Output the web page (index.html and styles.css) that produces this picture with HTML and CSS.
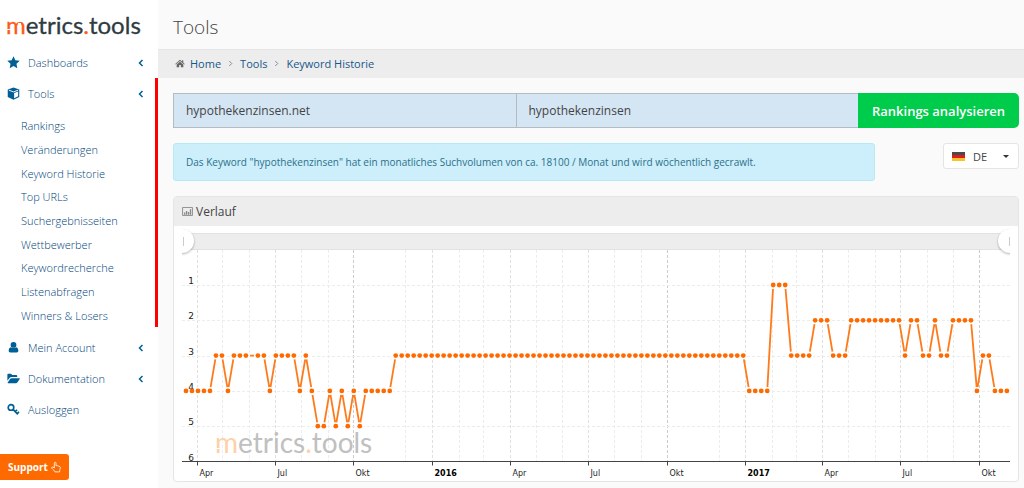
FILE: index.html
```html
<!DOCTYPE html>
<html lang="de">
<head>
    <meta charset="UTF-8">
    <meta name="viewport" content="width=device-width, initial-scale=1.0">
    <title>metrics.tools - Keyword Historie</title>
    <link rel="stylesheet" href="styles.css">
</head>
<body>
    <aside class="sidebar">
        <a href="#" class="logo" aria-label="metrics.tools">
            <svg width="150" height="32" viewBox="0 0 150 32">
                <text class="logo-text" x="6" y="26"><tspan class="logo-accent">m</tspan>etrics<tspan class="logo-accent">.</tspan>tools</text>
                <path class="logo-cut" d="M6 21.500h5M11 16.500h3M18 15.500h3"/>
            </svg>
        </a>
        <nav>
            <ul class="menu">
                <li>
                    <a href="#" class="menu-link">
                        <svg class="icon" viewBox="0 0 14 14"><path d="M7 .3l2 4.300 4.700.6-3.500 3.200.9 4.700L7 10.800l-4.100 2.300.9-4.700L.3 5.200 5 4.600z"/></svg>
                        <span>Dashboards</span>
                        <svg class="arrow" viewBox="0 0 6 8"><path d="M4.500 1L1.500 4l3 3"/></svg>
                    </a>
                </li>
                <li class="open">
                    <a href="#" class="menu-link">
                        <svg class="icon" viewBox="0 0 14 14"><path d="M7 .5l6.200 2.300v8.100L7 13.700.8 10.900V2.800z"/><path class="icon-cut" d="M2 3.400l5 1.900 5-1.900"/><path class="icon-hole" d="M7.700 6.400l4.300-1.600v5.200l-4.300 2.200z"/></svg>
                        <span>Tools</span>
                        <svg class="arrow" viewBox="0 0 6 8"><path d="M4.500 1L1.500 4l3 3"/></svg>
                    </a>
                    <ul class="submenu">
                        <li><a href="#">Rankings</a></li>
                        <li><a href="#">Veränderungen</a></li>
                        <li><a href="#">Keyword Historie</a></li>
                        <li><a href="#">Top URLs</a></li>
                        <li><a href="#">Suchergebnisseiten</a></li>
                        <li><a href="#">Wettbewerber</a></li>
                        <li><a href="#">Keywordrecherche</a></li>
                        <li><a href="#">Listenabfragen</a></li>
                        <li><a href="#">Winners &amp; Losers</a></li>
                    </ul>
                </li>
                <li>
                    <a href="#" class="menu-link">
                        <svg class="icon" viewBox="0 0 14 14"><circle cx="7" cy="4.200" r="3.100"/><path d="M4.200 6.600C2.400 7 1.800 8.600 1.800 10.600c0 1.200.8 1.800 1.800 1.800h6.800c1 0 1.800-.6 1.800-1.800 0-2-.6-3.600-2.400-4-1.600 1.400-4 1.400-5.600 0z"/></svg>
                        <span>Mein Account</span>
                        <svg class="arrow" viewBox="0 0 6 8"><path d="M4.500 1L1.500 4l3 3"/></svg>
                    </a>
                </li>
                <li>
                    <a href="#" class="menu-link">
                        <svg class="icon" viewBox="0 0 14 14"><path d="M.4 9.500V2.900c0-.6.400-1 1-1h2.800c.6 0 1 .4 1 1v.4h4.800c.6 0 1 .4 1 1v1.200H5c-.9 0-1.900.4-2.500 1.100z"/><path d="M.6 11.600l2.900-4.200c.3-.5.9-.8 1.500-.8h8.200c.6 0 .8.4.5.9l-2.600 3.800c-.3.500-.9.800-1.500.8H1.300c-.6 0-.9-.2-.7-.5z"/></svg>
                        <span>Dokumentation</span>
                        <svg class="arrow" viewBox="0 0 6 8"><path d="M4.500 1L1.500 4l3 3"/></svg>
                    </a>
                </li>
                <li>
                    <a href="#" class="menu-link">
                        <svg class="icon icon-line" viewBox="0 0 14 14"><circle cx="4.300" cy="4.800" r="3"/><path d="M6.500 6.800l5.200 5.400M8.800 9.300l2-1.900M10.900 11.400l2-1.900"/></svg>
                        <span>Ausloggen</span>
                    </a>
                </li>
            </ul>
        </nav>
    </aside>

    <main class="content">
        <h1 class="page-title">Tools</h1>
        <nav class="breadcrumb">
            <svg class="home" viewBox="0 0 12 10"><path d="M6 .6L.3 5.500l.6.7L6 1.900l5.100 4.300.6-.7-1.800-1.600V1H8.500v1.700z"/><path d="M6 2.800L2 6.100v3.500h3V6.900h2v2.700h3V6.100z"/></svg>
            <a href="#">Home</a>
            <svg class="sep" viewBox="0 0 6 8"><path d="M1.500 1l3 3-3 3"/></svg>
            <a href="#">Tools</a>
            <svg class="sep" viewBox="0 0 6 8"><path d="M1.500 1l3 3-3 3"/></svg>
            <a href="#">Keyword Historie</a>
        </nav>

        <div class="page-body">
            <form class="search">
                <input type="text" aria-label="Domain" value="hypothekenzinsen.net">
                <input type="text" aria-label="Keyword" value="hypothekenzinsen">
                <button type="button">Rankings analysieren</button>
            </form>

            <div class="info-row">
                <div class="alert">Das Keyword "hypothekenzinsen" hat ein monatliches Suchvolumen von ca. 18100 / Monat und wird wöchentlich gecrawlt.</div>
                <div class="country">
                    <svg class="flag" viewBox="0 0 13 9"><path fill="#4a4a4a" d="M0 0h13v3H0z"/><path fill="#e01b1b" d="M0 3h13v3H0z"/><path fill="#f6c52c" d="M0 6h13v3H0z"/></svg>
                    <select aria-label="Land">
                        <option>DE</option>
                        <option>AT</option>
                        <option>CH</option>
                    </select>
                    <svg class="caret" viewBox="0 0 6 3"><path d="M0 0h6L3 3z"/></svg>
                </div>
            </div>

            <section class="panel">
                <h2 class="panel-head">
                    <svg class="chart-icon" viewBox="0 0 12 10"><path fill="none" stroke="#888" d="M.5.5h11v9H.5z"/><path fill="#888" d="M2 6h1.500v2.500H2zM4.200 4.500h1.500v4H4.200zM6.400 5.500h1.500v3H6.400zM8.600 2.500h1.500v6H8.600z"/></svg>
                    Verlauf
                </h2>
                <div class="panel-body">
                    <svg id="history-chart" class="chart" viewBox="0 0 828 255" role="img" aria-label="Verlauf"></svg>
                </div>
            </section>
        </div>
    </main>

    <button type="button" class="support">
        Support
        <svg viewBox="0 0 12 14"><path d="M4 8.200V2.300c0-1.500 2-1.500 2 0v3.300c.5-.6 1.600-.5 1.900.2.700-.4 1.500-.1 1.700.6.900-.2 1.600.3 1.600 1.200 0 2-.9 2.700-.9 5.300H4.800C4.500 11.500 2.200 10 1 8.600c-.7-1 .4-2 1.400-1.400z"/></svg>
    </button>

    <script src="chart.js"></script>
</body>
</html>
```
FILE: styles.css
```css
* {
    box-sizing: border-box;
}
body {
    margin: 0;
    display: flex;
    min-height: 100vh;
    background: #fafafa;
    font-family: "Open Sans", sans-serif;
    font-size: 11px;
    color: #444;
}
a {
    color: #17578a;
    text-decoration: none;
}
ul {
    list-style: none;
    margin: 0;
    padding: 0;
}

/* Sidebar */
.sidebar {
    flex: 0 0 158px;
    background: #fff;
}
.logo {
    display: block;
    height: 47px;
    padding-top: 8px;
}
.logo svg {
    display: block;
}
.logo-text {
    font-family: Lato, sans-serif;
    font-size: 24px;
    fill: #2f3b40;
    stroke: #2f3b40;
    stroke-width: 0.3;
}
.logo-accent {
    fill: #ff5a14;
    stroke: #ff5a14;
}
.logo-cut {
    fill: none;
    stroke: #fff;
    stroke-width: 1;
}
.menu-link {
    display: flex;
    align-items: center;
    height: 31px;
    padding: 0 14px 0 7px;
}
.menu-link span {
    flex: 1;
}
.menu {
    font-weight: 300;
}
.menu a {
    color: #00457c;
}
.icon {
    width: 13px;
    height: 13px;
    margin-right: 8px;
    fill: #005f96;
}
.icon-cut {
    fill: none;
    stroke: #fff;
    stroke-width: 1;
}
.icon-hole {
    fill: #fff;
}
.icon-line {
    fill: none;
    stroke: #005f96;
    stroke-width: 1.8;
}
.arrow {
    width: 6px;
    height: 8px;
    fill: none;
    stroke: #005f96;
    stroke-width: 1.5;
}
.open {
    margin-bottom: 5px;
    border-right: 3px solid #f00;
}
.open .menu-link {
    padding-right: 11px;
}
.submenu {
    display: grid;
    grid-auto-rows: 1fr;
    align-items: center;
    height: 218px;
    padding: 5px 0 0 21px;
}

/* Content */
.content {
    flex: 1;
    min-width: 0;
}
.page-title {
    margin: 0;
    padding: 5px 15px 0;
    height: 49px;
    line-height: 44px;
    font-size: 19px;
    font-weight: 300;
    color: #444;
}
.breadcrumb {
    display: flex;
    align-items: center;
    gap: 7px;
    height: 29px;
    padding: 0 17px 2px;
    background: #ededed;
    border-top: 1px solid #e5e5e5;
}
.home {
    width: 10px;
    height: 9px;
    margin-right: -2px;
    fill: #666;
}
.sep {
    width: 5px;
    height: 7px;
    fill: none;
    stroke: #777;
}
.page-body {
    padding: 15px 5px 6px 15px;
}
.search {
    display: flex;
    height: 35px;
}
.search input {
    flex: 1;
    min-width: 0;
    padding: 0 12px;
    border: 1px solid #b5bbc0;
    border-radius: 0;
    background: #d4e6f4;
    font: 12px "Open Sans", sans-serif;
    color: #444;
}
.search input + input {
    border-left: 0;
    border-right: 0;
}
.search button {
    flex: 0 0 161px;
    padding: 0;
    border: 0;
    border-radius: 0 5px 5px 0;
    background: #00cc4b;
    color: #fff;
    font: 600 13px "Open Sans", sans-serif;
}
.info-row {
    display: flex;
    justify-content: space-between;
    align-items: flex-start;
    margin: 15px 0;
}
.alert {
    width: 83%;
    padding: 10px 12px;
    border: 1px solid #b5eaf5;
    border-radius: 3px;
    background: #cdeefb;
    color: #2b7189;
    font-size: 10px;
    line-height: 16px;
}
.country {
    position: relative;
}
.country select {
    width: 76px;
    height: 26px;
    padding: 0 29px;
    appearance: none;
    border: 1px solid #e5e5e5;
    border-radius: 3px;
    background: #fff;
    font: 11px "Open Sans", sans-serif;
    color: #444;
}
.flag {
    position: absolute;
    left: 9px;
    top: 9px;
    width: 13px;
    height: 9px;
}
.caret {
    position: absolute;
    right: 10px;
    top: 12px;
    width: 6px;
    height: 3px;
    fill: #333;
}

/* Chart panel */
.panel {
    border: 1px solid #e5e5e5;
    border-radius: 4px;
    background: #fff;
}
.panel-head {
    display: flex;
    align-items: center;
    gap: 3px;
    margin: 0;
    height: 29px;
    padding: 0 8px;
    background: #ededed;
    font-size: 12px;
    font-weight: 400;
}
.chart-icon {
    width: 11px;
    height: 9px;
}
.panel-body {
    padding: 0 8px;
}
.chart {
    display: block;
    width: 100%;
    font-family: "DejaVu Sans", sans-serif;
}
.track {
    fill: #ededed;
    stroke: #e2e2e2;
}
.handle {
    fill: #fff;
    filter: drop-shadow(0 1px 1px rgba(0, 0, 0, 0.3));
}
.grip {
    stroke: #ccc;
}
.grid {
    stroke: #ececec;
    stroke-dasharray: 3 2;
}
.grid-quarter {
    stroke: #e0e0e0;
}
.grid-strong {
    stroke: #ccc;
}
.axis {
    stroke: #444;
}
.line {
    fill: none;
    stroke: #ff7a1a;
    stroke-width: 1.8;
}
.halo {
    fill: #fff;
}
.dot {
    fill: #ff6a00;
}
.label-x {
    font-size: 8px;
    fill: #222;
}
.label-year {
    font-weight: 700;
    fill: #000;
}
.label-y {
    font-size: 9px;
    text-anchor: end;
    fill: #222;
}
.watermark {
    font-family: Lato, sans-serif;
    font-size: 28px;
    fill: #c0c0c0;
}
.watermark-accent {
    fill: #ffcfa8;
}
.watermark-cut {
    stroke: #fff;
}

/* Support button */
.support {
    position: fixed;
    left: 0;
    bottom: 8px;
    display: flex;
    align-items: center;
    gap: 3px;
    height: 26px;
    padding: 0 8px;
    border: 0;
    border-radius: 0 3px 3px 0;
    background: #ff6a00;
    color: #fff;
    font: 700 10px "Open Sans", sans-serif;
}
.support svg {
    width: 10px;
    height: 12px;
    fill: none;
    stroke: #fff;
}
```
FILE: chart.js
```js
// [position, number of weeks]
const runs = [
    [4, 5], [3, 2], [4, 1], [3, 6], [4, 1], [3, 4], [4, 1], [3, 1], [4, 1],
    [5, 2], [4, 1], [5, 1], [4, 1], [5, 1], [4, 1], [5, 1], [4, 5], [3, 59],
    [4, 4], [1, 3], [3, 4], [2, 3], [3, 3], [2, 9], [3, 1], [2, 2], [3, 2],
    [2, 1], [3, 2], [2, 4], [4, 1], [3, 2], [4, 3]
];
const missingWeek = 11;
const START = Date.UTC(2015, 2, 19);
const DAY = 86400000;
const PX_PER_DAY = 0.856;
const BOTTOM = 235.5;

const chart = document.getElementById("history-chart");
const xOf = date => 4 + (date - START) / DAY * PX_PER_DAY;
const yOf = rank => 59 + (rank - 1) * 35.3;

const points = [];
runs.forEach(([rank, weeks]) => {
    for (let i = 0; i < weeks; i++) {
        points.push([xOf(START + points.length * 7 * DAY), yOf(rank)]);
    }
});

let svg = "";

// grid and x axis
let ticks = "";
for (let m = 3; m <= 33; m++) {
    const month = m % 12;
    // no line for November
    if (month === 10) continue;
    const x = Math.floor(xOf(Date.UTC(2015, m, 1))) + 0.5;
    let cls = "grid";
    if (month % 3 === 0) {
        cls += month === 9 ? " grid-strong" : " grid-quarter";
        const name = { 0: 2015 + Math.floor(m / 12), 3: "Apr", 6: "Jul", 9: "Okt" }[month];
        ticks += `<path class="axis" d="M${x} ${BOTTOM}v4"/>`;
        ticks += `<text class="label-x${month === 0 ? " label-year" : ""}" x="${x + 2}" y="250">${name}</text>`;
    }
    svg += `<path class="${cls}" d="M${x} 24V${BOTTOM}"/>`;
}
for (let rank = 1; rank <= 5; rank++) {
    svg += `<path class="grid" d="M0 ${Math.round(yOf(rank)) + 0.5}H828"/>`;
}

svg += `<text class="watermark" x="33" y="227"><tspan class="watermark-accent">m</tspan>etrics<tspan class="watermark-accent">.</tspan>tools</text>`;
svg += `<path class="watermark-cut" d="M34 222.5h5M40 215.5h3"/>`;
svg += `<path class="axis" d="M0 ${BOTTOM}H828"/>` + ticks;

// scrollbar
svg += `<rect class="track" x="0" y="7.5" width="828" height="16"/>`;
svg += `<circle class="handle" cx="0" cy="15" r="12"/><path class="grip" d="M1.5 11v9"/>`;
svg += `<circle class="handle" cx="828" cy="15" r="12"/><path class="grip" d="M827.5 11v9"/>`;

// series
const dots = points.filter((p, i) => i !== missingWeek);
svg += `<polyline class="line" points="${points.join(" ")}"/>`;
svg += dots.map(([x, y]) => `<circle class="halo" cx="${x}" cy="${y}" r="4"/>`).join("");
for (let rank = 1; rank <= 6; rank++) {
    svg += `<text class="label-y" x="12" y="${yOf(rank) - 1}">${rank}</text>`;
}
svg += dots.map(([x, y]) => `<circle class="dot" cx="${x}" cy="${y}" r="2.4"/>`).join("");

chart.innerHTML = svg;
```
